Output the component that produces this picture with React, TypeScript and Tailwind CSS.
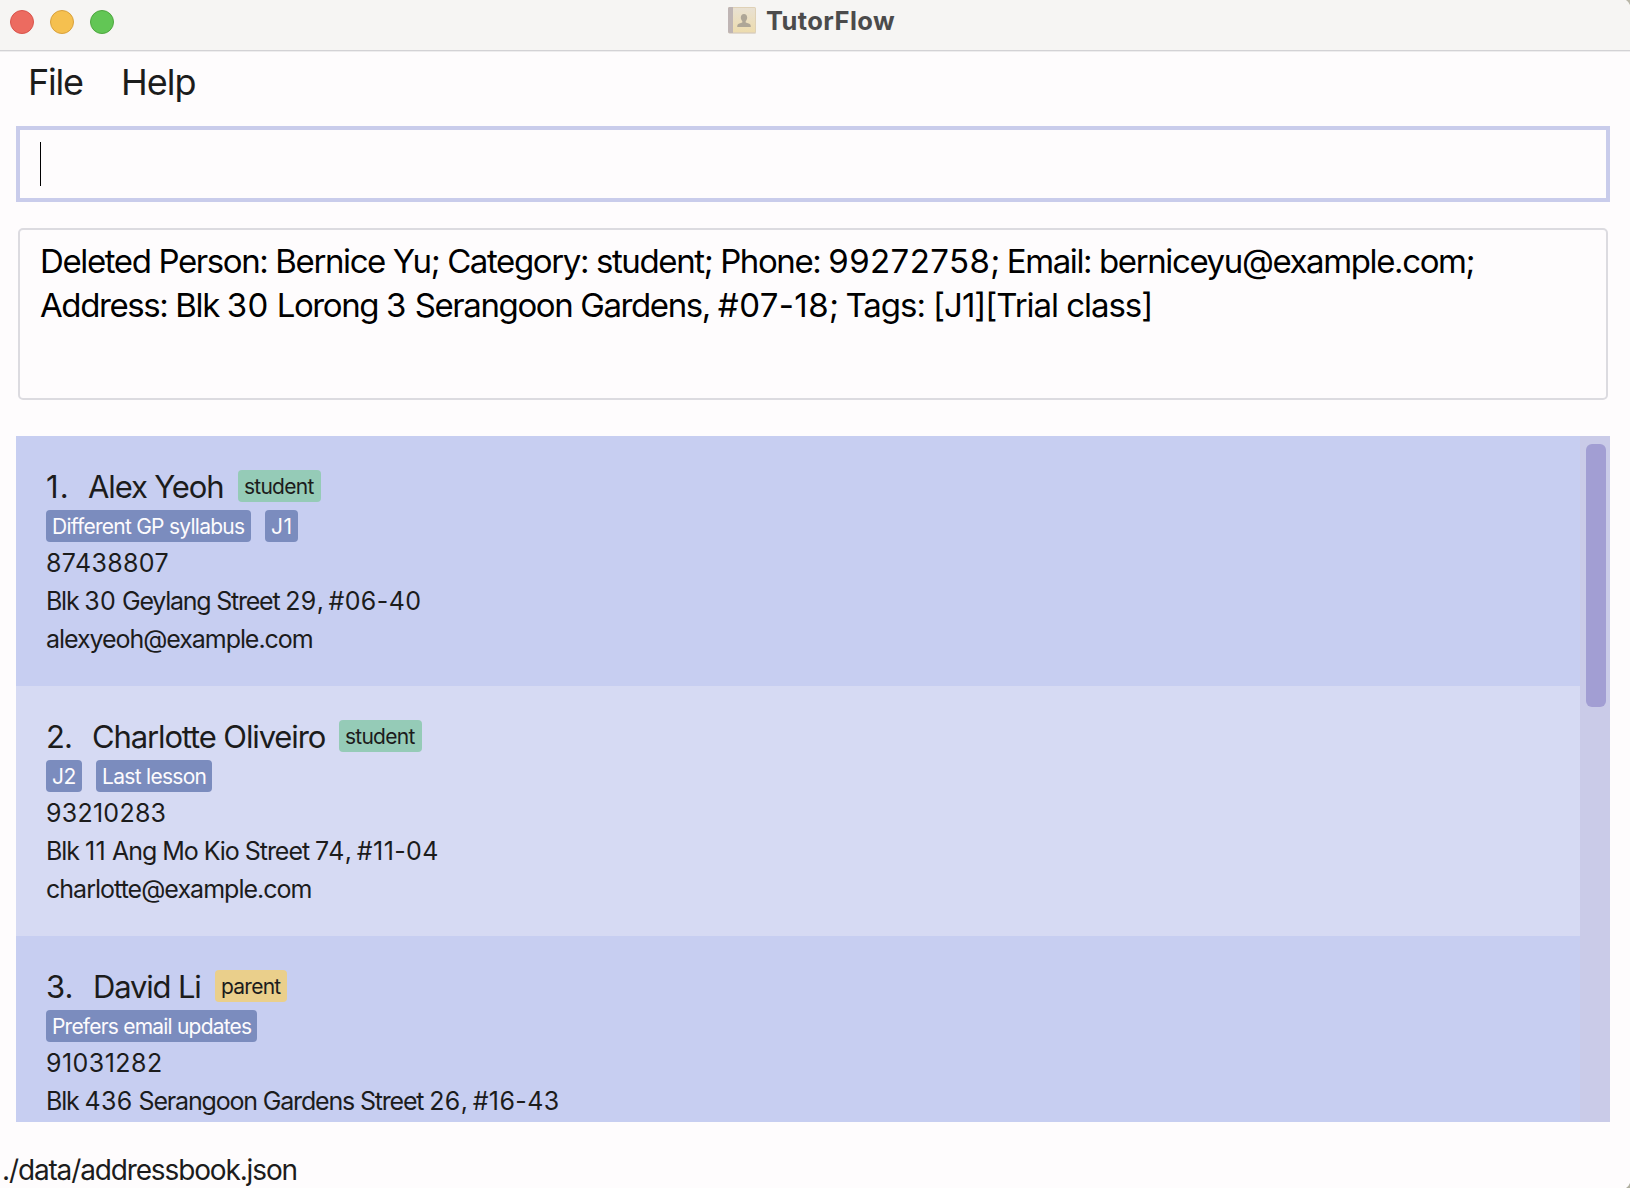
import React from "react";

type Badge = { label: string; cls: string };
type Person = {
  index: string;
  indexCls: string;
  name: string;
  nameCls: string;
  role: Badge;
  tags: Badge[];
  phone: string;
  phoneCls: string;
  address: string;
  addressCls: string;
  email: string;
  emailCls: string;
  rowCls: string;
};

const people: Person[] = [
  {
    index: "1.",
    indexCls: "w-[42px] tracking-[1.2px]",
    name: "Alex Yeoh",
    nameCls: "w-[150px] tracking-[-1.13px]",
    role: { label: "student", cls: "w-[83px] bg-[#95cbb7] tracking-[-0.75px]" },
    tags: [
      { label: "Different GP syllabus", cls: "w-[205px] tracking-[-0.74px]" },
      { label: "J1", cls: "w-[33px] tracking-[0.6px]" },
    ],
    phone: "87438807",
    phoneCls: "tracking-[0.36px]",
    address: "Blk 30 Geylang Street 29, #06-40",
    addressCls: "tracking-[-1.24px]",
    email: "alexyeoh@example.com",
    emailCls: "tracking-[-1.06px]",
    rowCls: "bg-[#c7cef1]",
  },
  {
    index: "2.",
    indexCls: "w-[46px] tracking-[-0.9px]",
    name: "Charlotte Oliveiro",
    nameCls: "w-[247px] tracking-[-1.13px]",
    role: { label: "student", cls: "w-[83px] bg-[#95cbb7] tracking-[-0.75px]" },
    tags: [
      { label: "J2", cls: "w-[36px] tracking-[-0.5px]" },
      { label: "Last lesson", cls: "w-[116px] tracking-[-0.7px]" },
    ],
    phone: "93210283",
    phoneCls: "tracking-[0.25px]",
    address: "Blk 11 Ang Mo Kio Street 74, #11-04",
    addressCls: "tracking-[-1.05px]",
    email: "charlotte@example.com",
    emailCls: "tracking-[-0.98px]",
    rowCls: "bg-[#d6daf3]",
  },
  {
    index: "3.",
    indexCls: "w-[47px] tracking-[0px]",
    name: "David Li",
    nameCls: "w-[122px] tracking-[-1.17px]",
    role: { label: "parent", cls: "w-[72px] bg-[#eacf8b] tracking-[-0.75px]" },
    tags: [{ label: "Prefers email updates", cls: "w-[211px] tracking-[-0.79px]" }],
    phone: "91031282",
    phoneCls: "tracking-[0.46px]",
    address: "Blk 436 Serangoon Gardens Street 26, #16-43",
    addressCls: "tracking-[-1.18px]",
    email: "li@example.com",
    emailCls: "tracking-[-1px]",
    rowCls: "bg-[#c7cef1]",
  },
];

/** Text whose digit groups are set looser than its words. */
function Mixed({ text }: { text: string }) {
  return (
    <>
      {text.split(/([\d#-]+)/).map((part, i) =>
        i % 2 ? (
          <span key={i} className="tracking-[0.4px]">
            {part}
          </span>
        ) : (
          part
        ),
      )}
    </>
  );
}

function Pill({ label, cls, dark }: Badge & { dark?: boolean }) {
  return (
    <span
      className={`h-8 shrink-0 rounded-[4px] pl-1.5 text-[21px] leading-[34px] whitespace-nowrap ${
        dark ? "text-[#1c1c1c]" : "bg-[#7b8cbe] text-[#fdfbfd]"
      } ${cls}`}
    >
      {label}
    </span>
  );
}

function PersonRow({ p, showEmail }: { p: Person; showEmail: boolean }) {
  return (
    <li className={`h-[250px] shrink-0 pt-[30px] pl-[30px] whitespace-nowrap ${p.rowCls}`}>
      <div className="flex h-10 items-center text-[31px] leading-10">
        <span className={`pt-0.5 ${p.indexCls}`}>{p.index}</span>
        <span className={`pt-0.5 ${p.nameCls}`}>{p.name}</span>
        <Pill {...p.role} dark />
      </div>
      <div className="mt-1 mb-0.5 flex gap-3.5">
        {p.tags.map((t) => (
          <Pill key={t.label} {...t} />
        ))}
      </div>
      <div className="text-[25px] leading-[38px]">
        <p className={p.phoneCls}>{p.phone}</p>
        <p className={p.addressCls}>
          <Mixed text={p.address} />
        </p>
        {showEmail && <p className={p.emailCls}>{p.email}</p>}
      </div>
    </li>
  );
}

function BookIcon() {
  return (
    <svg width="28" height="28" viewBox="0 0 28 28">
      <defs>
        <linearGradient id="cover" x1="0" y1="0" x2="0" y2="1">
          <stop offset="0" stopColor="#e9e1d2" />
          <stop offset="1" stopColor="#eddcae" />
        </linearGradient>
      </defs>
      <rect x="0.5" y="1.5" width="27.5" height="25.5" rx="1.5" fill="#e0d9d0" />
      <rect x="0" y="0" width="28" height="26" rx="1.5" fill="#dfd1b6" />
      <rect x="5" y="1" width="22" height="24" rx="0.5" fill="url(#cover)" />
      <path d="M1.500 0H5v26H1.500A1.500 1.500 0 0 1 0 24.500V1.500A1.500 1.500 0 0 1 1.500 0Z" fill="#bfb5b4" />
      <path
        d="M16 7c2 0 3.200 1.500 3.200 3.600 0 1.600-.7 2.800-1.500 3.500v1.300l3.600 1.400c1 .4 1.500 1.200 1.500 3.200H9.200c0-2 .5-2.800 1.500-3.200l3.600-1.400v-1.300c-.8-.7-1.500-1.900-1.500-3.500C12.800 8.500 14 7 16 7Z"
        fill="#aea697"
      />
    </svg>
  );
}

export default function App() {
  return (
    <div className="relative flex h-[1188px] w-[1630px] flex-col overflow-hidden bg-[#fefcfd] font-['Inter',sans-serif] text-[#1c1c1c]">
      <header className="flex h-[52px] shrink-0 border-b border-[#eeedee] bg-[#f6f5f3]">
        <div className="flex w-full border-b border-[#d3d2d5]">
          <div className="flex gap-4 pt-2.5 pl-2.5">
            <span className="size-6 rounded-full border border-[#d9544b] bg-[#ec6b60]" />
            <span className="size-6 rounded-full border border-[#d9a13c] bg-[#f5c04f]" />
            <span className="size-6 rounded-full border border-[#4ea73f] bg-[#62c655]" />
          </div>
          <div className="ml-[614px] flex pt-[7px]">
            <BookIcon />
            <h1 className="-mt-[2px] ml-[10px] text-[25.500px] leading-8 font-bold tracking-[0.4px] text-[#4b4b4b]">
              TutorFlow
            </h1>
          </div>
        </div>
      </header>

      <nav className="flex h-[74px] shrink-0 pt-[10px] pl-7 text-[36px] leading-[40px]">
        <span className="w-[93px] tracking-[-1.2px]">File</span>
        <span className="tracking-[-1px]">Help</span>
      </nav>

      <div className="mr-5 ml-4 flex h-[76px] shrink-0 items-center border-4 border-[#c9cceb] pl-5">
        <span className="h-11 w-px bg-black" />
      </div>

      <div className="mt-[26px] mr-[22px] ml-[18px] h-[172px] shrink-0 rounded-[5px] border-2 border-[#dcdbe0] pt-[9px] pl-5 text-[33px] leading-[44px] whitespace-nowrap text-black">
        <p className="tracking-[-1.388px]">
          <Mixed text="Deleted Person: Bernice Yu; Category: student; Phone: 99272758; Email: berniceyu@example.com;" />
        </p>
        <p className="tracking-[-1.395px]">
          <Mixed text="Address: Blk 30 Lorong 3 Serangoon Gardens, #07-18; " />
          <span className="tracking-[-1.04px]">Tags: [J1][Trial class]</span>
        </p>
      </div>

      <main className="mt-9 mr-5 ml-4 flex h-[686px] shrink-0">
        <ul className="flex flex-1 flex-col overflow-hidden">
          {people.map((p, i) => (
            <PersonRow key={p.name} p={p} showEmail={i < 2} />
          ))}
        </ul>
        <div className="w-[30px] bg-[#cacbe8] pt-2 pl-1.5">
          <div className="h-[263px] w-5 rounded-[6px] bg-[#a29ed3]" />
        </div>
      </main>

      <footer className="flex-1 pt-[29px] pl-0.5 text-[28px] leading-[38px] tracking-[-1.14px]">
        ./data/addressbook.json
      </footer>

      <svg className="absolute top-0 right-0" width="5" height="5" viewBox="0 0 5 5">
        <path d="M1 0H5V5Q4 2 1 0Z" fill="#b9b7a8" />
      </svg>
      <svg className="absolute right-0 bottom-0" width="5" height="5" viewBox="0 0 5 5">
        <path d="M1 5H5V0Q4 3 1 5Z" fill="#b0afa0" />
      </svg>
    </div>
  );
}
